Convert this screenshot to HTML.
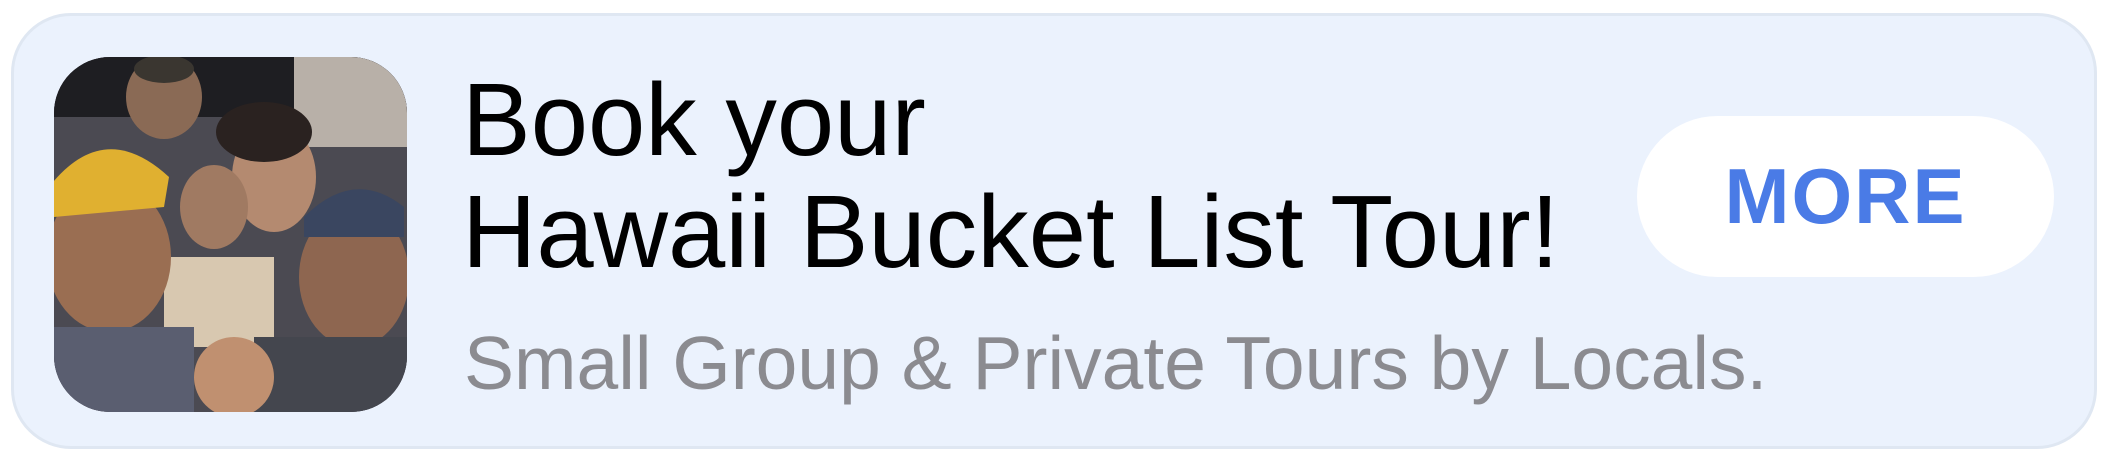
<!DOCTYPE html>
<html><head><style>
body{margin:0;width:2112px;height:464px;background:#fff;overflow:hidden;font-family:"Liberation Sans",sans-serif;}
.card{position:absolute;left:11px;top:13px;width:2086px;height:436px;background:#ebf2fd;border:3px solid #dfe7f2;border-radius:60px;box-sizing:border-box;}
.img{position:absolute;left:54px;top:57px;width:353px;height:355px;border-radius:56px;overflow:hidden;background:#4a4850;}
.t{position:absolute;left:462px;color:#000;font-size:103px;white-space:nowrap;line-height:1.15;}
.s{position:absolute;left:464px;top:320px;color:#8b8b90;font-size:75px;white-space:nowrap;line-height:1.15;}
.btn{position:absolute;left:1637px;top:116px;width:417px;height:161px;background:#fff;border-radius:81px;color:#4a7be6;font-weight:bold;font-size:78px;text-align:center;line-height:161px;letter-spacing:2px;}
</style></head><body>
<div class="card"></div>
<div class="img">
<svg width="353" height="355" viewBox="0 0 353 355">
<rect width="353" height="355" fill="#4b4a52"/>
<rect x="0" y="0" width="353" height="60" fill="#1e1e22"/>
<rect x="240" y="0" width="113" height="90" fill="#b8b0a8"/>
<ellipse cx="110" cy="40" rx="38" ry="42" fill="#8a6a55"/>
<ellipse cx="110" cy="12" rx="30" ry="14" fill="#3a3630"/>
<ellipse cx="220" cy="120" rx="42" ry="55" fill="#b48a70"/>
<ellipse cx="210" cy="75" rx="48" ry="30" fill="#2a2220"/>
<ellipse cx="160" cy="150" rx="34" ry="42" fill="#a07a62"/>
<rect x="110" y="200" width="110" height="90" fill="#d8c8b0"/>
<ellipse cx="55" cy="200" rx="62" ry="75" fill="#9a6e52"/>
<path d="M-5 130 Q50 60 115 120 L110 150 L0 160Z" fill="#e0b030"/>
<ellipse cx="300" cy="220" rx="55" ry="70" fill="#8e6650"/>
<path d="M250 160 Q300 110 350 150 L350 180 L250 180Z" fill="#3a4660"/>
<rect x="0" y="270" width="140" height="90" fill="#5a5e70"/>
<rect x="200" y="280" width="153" height="80" fill="#44464e"/>
<ellipse cx="180" cy="320" rx="40" ry="40" fill="#c09070"/>
</svg>
</div>
<div class="t" style="top:61px">Book your</div>
<div class="t" style="top:173px">Hawaii Bucket List Tour!</div>
<div class="s">Small Group &amp; Private Tours by Locals.</div>
<div class="btn">MORE</div>
</body></html>
